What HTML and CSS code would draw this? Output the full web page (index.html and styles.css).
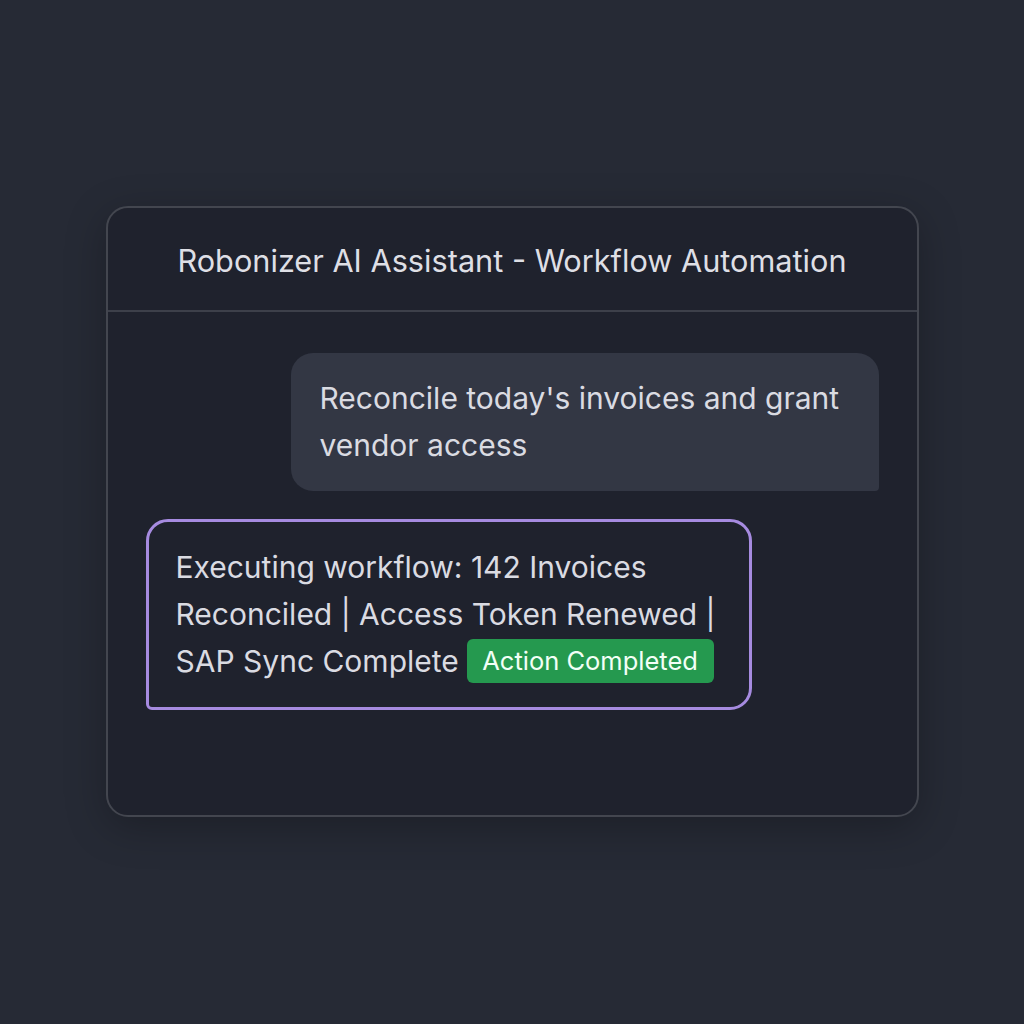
FILE: index.html
```html
<!DOCTYPE html>
<html>
<head>
<meta charset="utf-8">
<link rel="stylesheet" href="styles.css">
</head>
<body>
<div class="page">
  <div class="card">
    <div class="card-header">Robonizer AI Assistant - Workflow Automation</div>
    <div class="messages">
      <div class="bubble user">Reconcile today's invoices and grant vendor access</div>
      <div class="bubble bot">Executing workflow: 142 Invoices Reconciled | Access Token Renewed | SAP Sync Complete <span class="badge">Action Completed</span></div>
    </div>
  </div>
</div>
</body>
</html>
```
FILE: styles.css
```css
html, body {
  margin: 0;
  padding: 0;
  background: #262a35;
}
.page {
  width: 1024px;
  height: 1024px;
  display: flex;
  justify-content: center;
  padding-top: 206px;
  box-sizing: border-box;
  font-family: Inter, "Noto Sans", sans-serif;
}
.card {
  width: 813px;
  height: 611px;
  box-sizing: border-box;
  background: #1f222d;
  border: 2px solid #43464f;
  border-radius: 22px;
  box-shadow: 0 10px 40px rgba(0,0,0,0.25);
  display: flex;
  flex-direction: column;
}
.card-header {
  height: 104px;
  box-sizing: border-box;
  border-bottom: 2px solid #3d404a;
  display: flex;
  align-items: center;
  justify-content: center;
  color: #dedfe5;
  font-size: 30.7px;
  padding-top: 3px;
}
.messages {
  padding: 41px 38px 0 38px;
  display: flex;
  flex-direction: column;
  gap: 28px;
}
.bubble {
  font-size: 30px;
  line-height: 47px;
  color: #dadbe2;
  box-sizing: border-box;
}
.user {
  align-self: flex-end;
  width: 588px;
  background: #333744;
  border-radius: 22px 22px 4px 22px;
  padding: 22px 20px 22px 29px;
}
.bot {
  align-self: flex-start;
  width: 606px;
  border: 3px solid #a68be0;
  border-radius: 22px 22px 22px 6px;
  padding: 22px 20px 21px 27px;
  background: #1f222d;
}
.badge {
  display: inline-block;
  background: #25994f;
  color: #f2fff6;
  font-size: 25.5px;
  line-height: 44px;
  padding: 0 16px 0 15px;
  border-radius: 6px;
  vertical-align: middle;
  position: relative;
  top: -3px;
}
```
